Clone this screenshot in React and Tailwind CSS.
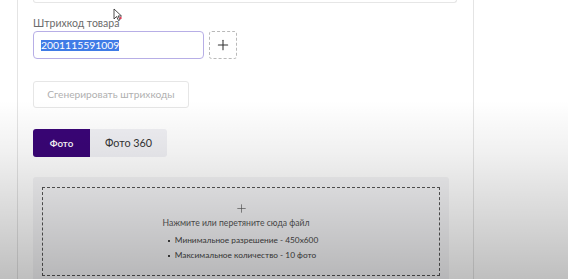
import { Plus } from 'lucide-react';

export default function App() {
  return (
    <div className="relative w-[568px] h-[279px] overflow-hidden bg-white font-['Lato','Noto_Sans',sans-serif]">
      <div className="ml-[17px] w-[457px] h-full border-x border-[#e4e4e4] pl-[15px]">
        <div className="w-[424px] h-[3px] border-x border-b border-[#e6e6e6] rounded-b" />

        <div className="mt-[13px] text-[10.5px] leading-[14px] text-[#6b6b6b]">Штрихкод товара</div>

        <div className="mt-[1px] flex gap-[5px]">
          <div className="w-[171px] h-[28px] rounded-[4px] border border-[#b7aee6] flex items-center px-[7px]">
            <span className="bg-[#3f7be6] text-white text-[10.4px] leading-[11px]">2001115591009</span>
          </div>
          <div className="w-[28px] h-[28px] rounded-[3px] border border-dashed border-[#b9b9b9] flex items-center justify-center">
            <Plus size={16} strokeWidth={1.6} className="text-[#333]" />
          </div>
        </div>

        <div className="mt-[22px] w-[156px] h-[27px] rounded-[3px] border border-[#e6e6e6] flex items-center justify-center text-[10.2px] text-[#b0b0b0]">
          Сгенерировать штрихкоды
        </div>

        <div className="mt-[21px] flex h-[28px]">
          <div className="w-[57px] rounded-l-[3px] bg-[#3a0577] text-white text-[9.8px] font-semibold flex items-center justify-center">Фото</div>
          <div className="w-[77px] rounded-r-[3px] bg-[#f0f0f4] text-[#333] text-[10.8px] flex items-center justify-center">Фото 360</div>
        </div>

        <div className="mt-[20px] w-[416px] h-[110px] bg-[#f4f4f6] rounded-[3px] px-[9px] pt-[10px]">
          <div className="h-[89px] border border-dashed border-[#555] flex flex-col items-center pt-[14px]">
            <Plus size={13} strokeWidth={1.2} className="text-[#555]" />
            <div className="mt-[3px] mr-[10px] text-[8.6px] leading-[11px] text-[#555]">Нажмите или перетяните сюда файл</div>
            <ul className="mt-[4px] ml-[4px] text-[8.3px] leading-[15px] text-[#444]">
              <li className="flex items-center gap-[5px]"><span className="w-[2px] h-[2px] bg-[#444]" />Минимальное разрешение - 450x600</li>
              <li className="flex items-center gap-[5px]"><span className="w-[2px] h-[2px] bg-[#444]" />Максимальное количество - 10 фото</li>
            </ul>
          </div>
        </div>
      </div>

      <svg className="absolute left-[113px] top-[8px]" width="10" height="14" viewBox="0 0 10 14">
        <path d="M1 1 L1 11 L3.5 8.5 L5.5 12.5 L7 11.8 L5 8 L8.5 8 Z" fill="#fff" stroke="#222" strokeWidth="0.8" />
        <circle cx="7.5" cy="10" r="1.2" fill="#e0405a" />
      </svg>

      <div className="pointer-events-none absolute inset-0 bg-[linear-gradient(to_bottom,transparent_36%,rgba(0,0,0,0.06)_55%,rgba(0,0,0,0.25))]" />
    </div>
  );
}
